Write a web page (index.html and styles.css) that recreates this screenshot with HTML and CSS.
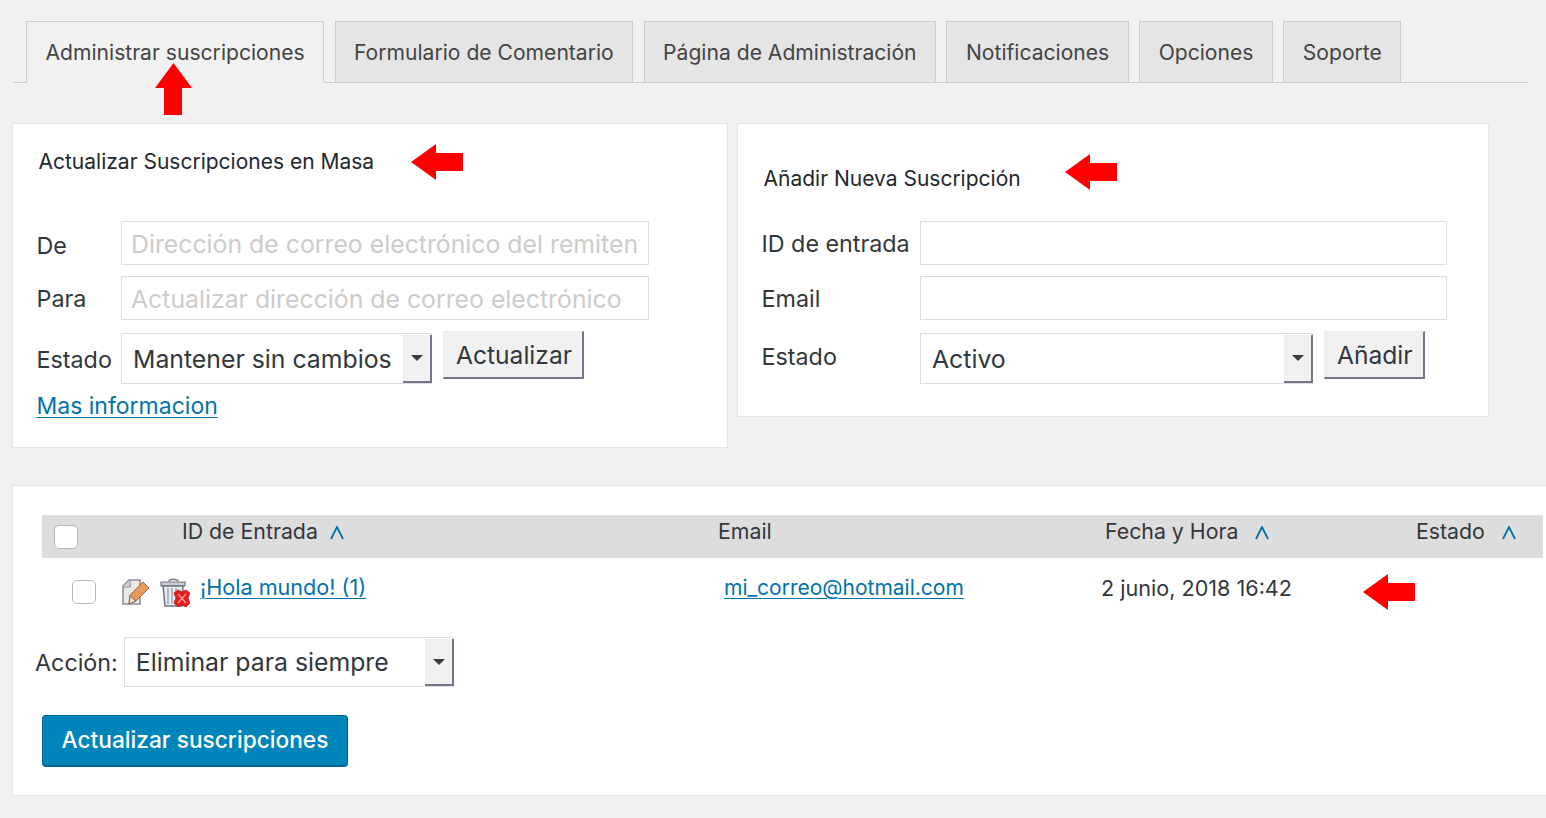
FILE: index.html
```html
<!DOCTYPE html>
<html lang="es">
<head>
  <meta charset="UTF-8" />
  <meta name="viewport" content="width=device-width, initial-scale=1" />
  <title>Suscripciones</title>
  <link rel="stylesheet" href="styles.css">
</head>
<body>

  <nav class="tabs">
    <a class="tab tab-active" href="#">Administrar suscripciones
      <svg class="arrow arrow-up" width="37" height="52" viewBox="0 0 37 52"><path d="M18.5 0L37 25H27V52H9V25H0Z" fill="#f00"/></svg>
    </a>
    <a class="tab" href="#">Formulario de Comentario</a>
    <a class="tab" href="#">Página de Administración</a>
    <a class="tab" href="#">Notificaciones</a>
    <a class="tab" href="#">Opciones</a>
    <a class="tab" href="#">Soporte</a>
  </nav>

  <div class="panels">
    <section class="panel panel-mass">
      <h2 class="panel-title">Actualizar Suscripciones en Masa
        <svg class="arrow" width="52" height="36" viewBox="0 0 52 36"><path d="M0 18L25 0V9H52V27H25V36Z" fill="#f00"/></svg>
      </h2>
      <form class="sub-form">
        <label class="field-label">De</label>
        <input class="field" type="text" placeholder="Dirección de correo electrónico del remitente" />
        <label class="field-label">Para</label>
        <input class="field" type="text" placeholder="Actualizar dirección de correo electrónico" />
        <label class="field-label field-label-status">Estado</label>
        <div class="status-row">
          <div class="select select-keep">
            <select><option>Mantener sin cambios</option></select>
            <span class="select-btn"></span>
          </div>
          <button class="btn" type="button">Actualizar</button>
        </div>
      </form>
      <a class="more-link" href="#">Mas informacion</a>
    </section>

    <section class="panel panel-new">
      <h2 class="panel-title">Añadir Nueva Suscripción
        <svg class="arrow" width="52" height="36" viewBox="0 0 52 36"><path d="M0 18L25 0V9H52V27H25V36Z" fill="#f00"/></svg>
      </h2>
      <form class="sub-form">
        <label class="field-label">ID de entrada</label>
        <input class="field" type="text" />
        <label class="field-label">Email</label>
        <input class="field" type="text" />
        <label class="field-label field-label-status">Estado</label>
        <div class="status-row">
          <div class="select select-active">
            <select><option>Activo</option></select>
            <span class="select-btn"></span>
          </div>
          <button class="btn" type="button">Añadir</button>
        </div>
      </form>
    </section>
  </div>

  <section class="panel panel-list">
    <div class="list-head">
      <span class="cell-check"><input class="check" type="checkbox" /></span>
      <span class="head-id">ID de Entrada <svg class="sort" width="14" height="14" viewBox="0 0 14 14"><path d="M1 13L7 1L13 13" fill="none" stroke="#0073aa" stroke-width="1.8"/></svg></span>
      <span class="head-email">Email</span>
      <span class="head-date">Fecha y Hora <svg class="sort" width="14" height="14" viewBox="0 0 14 14"><path d="M1 13L7 1L13 13" fill="none" stroke="#0073aa" stroke-width="1.8"/></svg></span>
      <span class="head-status">Estado <svg class="sort" width="14" height="14" viewBox="0 0 14 14"><path d="M1 13L7 1L13 13" fill="none" stroke="#0073aa" stroke-width="1.8"/></svg></span>
    </div>

    <div class="list-row">
      <span class="row-check"><input class="check" type="checkbox" /></span>
      <span class="row-icons">
        <svg width="30" height="30" viewBox="0 0 30 30">
          <path d="M3 9L9 3H20V27H3Z" fill="#eceae6" stroke="#8f8f98" stroke-width="1.6"/>
          <path d="M3 10H10V3" fill="#d5d5d8" stroke="#8f8f98" stroke-width="1.2"/>
          <path d="M10 18L23 5L29 11L16 24L9 27Z" fill="#e49a5c" stroke="#a86a3a" stroke-width="1"/>
          <path d="M9 27L10 19L16 24Z" fill="#f3dcb8" stroke="#5a5a78" stroke-width="0.8"/>
        </svg>
        <svg width="30" height="30" viewBox="0 0 30 30">
          <path d="M9 4.500C9 1.500 18 1.500 18 4.500" fill="none" stroke="#777b85" stroke-width="1.5"/>
          <path d="M1 5H25V9H1Z" fill="#c9ced6" stroke="#70747e" stroke-width="1.2"/>
          <path d="M3 9H23L22 29H5Z" fill="#e6e9ee" stroke="#70747e" stroke-width="1.5"/>
          <path d="M8 11V27M12 11V27M16 11V17" stroke="#a9afb9" stroke-width="1.6"/>
          <path d="M14 16L18 13L22 15L26 13L30 16L28 21L30 26L26 30L22 28L18 30L14 26L16 21Z" fill="#e4201c" stroke="#b71a16" stroke-width="0.8"/>
          <path d="M18 17L26 26M26 17L18 26" stroke="#f4a09a" stroke-width="1.2"/>
        </svg>
      </span>
      <a class="row-link row-title" href="#">¡Hola mundo! (1)</a>
      <a class="row-link row-email" href="#">mi_correo@hotmail.com</a>
      <span class="row-date">2 junio, 2018 16:42</span>
      <svg class="arrow" width="52" height="36" viewBox="0 0 52 36"><path d="M0 18L25 0V9H52V27H25V36Z" fill="#f00"/></svg>
    </div>

    <div class="action-row">
      <label class="field-label">Acción:</label>
      <div class="select select-action">
        <select><option>Eliminar para siempre</option></select>
        <span class="select-btn"></span>
      </div>
    </div>

    <button class="btn-primary" type="button">Actualizar suscripciones</button>
  </section>

</body>
</html>
```

FILE: styles.css
```css
html, body {
  overflow: hidden;
}
body {
  font-family: Inter, "Liberation Sans", sans-serif;
  margin: 0;
  width: 1546px;
  height: 818px;
  background: #f1f1f1;
  color: #32373c;
}

/* tabs */
.tabs {
  display: flex;
  gap: 10.4px;
  height: 62px;
  width: 1515px;
  box-sizing: border-box;
  margin: 21px 0 0 13px;
  padding-left: 13px;
  border-bottom: 1px solid #ccc;
}
.tab {
  position: relative;
  display: flex;
  align-items: center;
  justify-content: center;
  box-sizing: border-box;
  height: 62px;
  padding: 0 18.5px;
  border: 1px solid #ccc;
  background: #e5e5e5;
  color: #444;
  font-size: 21.1px;
  text-decoration: none;
  white-space: nowrap;
}
.tab-active {
  background: #f1f1f1;
  border-bottom-color: #f1f1f1;
}
.arrow {
  flex: none;
  display: block;
}
.arrow-up {
  position: absolute;
  left: 128px;
  top: 41px;
}

/* top panels */
.panels {
  display: flex;
  align-items: flex-start;
  gap: 9px;
  margin: 40px 0 0 12px;
}
.panel {
  background: #fff;
  border: 1px solid #e5e5e5;
  box-sizing: border-box;
}
.panel-mass {
  width: 716px;
  height: 325px;
  padding: 19px 24px 0;
}
.panel-new {
  width: 752px;
  height: 294px;
  padding: 30px 24px 0;
}
.panel-title {
  display: flex;
  align-items: center;
  gap: 37px;
  margin: 0 0 0 1.5px;
  height: 36px;
  font-size: 21px;
  font-weight: 400;
  color: #23282d;
  white-space: nowrap;
}
.panel-mass .arrow { margin-top: 2px; }
.panel-new .panel-title {
  align-items: flex-end;
  gap: 44px;
  height: 37px;
}
.panel-new .arrow { align-self: flex-start; }

.sub-form {
  display: grid;
  align-items: center;
  row-gap: 11px;
}
.panel-mass .sub-form {
  grid-template-columns: 84px 528px;
  margin-top: 42px;
}
.panel-new .sub-form {
  grid-template-columns: 158px 527px;
  margin-top: 30px;
}
.field-label {
  font-size: 23.3px;
  color: #32373c;
  white-space: nowrap;
}
.sub-form .field-label { margin-left: -0.5px; }
.sub-form .field-label:first-child { padding-top: 1px; }
.panel-mass .field-label:first-child { padding-top: 5px; }
.sub-form .field-label-status {
  padding-top: 3px;
}
.panel-new .field-label-status {
  padding-top: 0;
  margin-top: -2px;
}
.field {
  box-sizing: border-box;
  width: 100%;
  height: 44px;
  padding: 2px 9px 0;
  border: 1px solid #ddd;
  background: #fff;
  font-family: inherit;
  font-size: 24.8px;
  color: #32373c;
  outline: none;
}
.field::placeholder {
  color: #ccc;
  opacity: 1;
}
.status-row {
  display: flex;
  align-items: flex-start;
  gap: 11px;
  width: 560px;
}

/* select box with the square dropdown button */
.select {
  position: relative;
  flex: none;
  height: 51px;
  margin-top: 2px;
}
.select select {
  appearance: none;
  box-sizing: border-box;
  width: 100%;
  height: 100%;
  padding: 0 0 0 11px;
  border: 1px solid #ddd;
  border-radius: 0;
  background: #fff;
  font-family: inherit;
  font-size: 24.8px;
  color: #32373c;
}
.select-keep { width: 311px; }
.select-active { width: 393px; }
.select-action { width: 330px; height: 50px; margin-top: 0; }
.select-btn {
  position: absolute;
  top: 2px;
  right: 0;
  bottom: 1px;
  width: 29px;
  box-sizing: border-box;
  background: #f1f1f1;
  border-right: 2px solid #73738a;
  border-bottom: 2px solid #73738a;
}
.select-btn::after {
  content: "";
  position: absolute;
  left: 8px;
  top: 20px;
  border-top: 6px solid #3c3c42;
  border-left: 6px solid transparent;
  border-right: 6px solid transparent;
}
.btn {
  box-sizing: border-box;
  height: 48px;
  padding: 0 10px 0 12px;
  border: 0;
  border-top: 1px solid #eee;
  border-left: 1px solid #eee;
  border-right: 2px solid #73738a;
  border-bottom: 2px solid #73738a;
  background: #f1f1f1;
  font-family: inherit;
  font-size: 24.6px;
  color: #32373c;
}
.more-link {
  display: inline-block;
  margin: 8px 0 0 -0.5px;
  color: #0073aa;
  font-size: 23px;
  line-height: 29px;
  text-decoration: underline;
  text-underline-offset: 3px;
  text-decoration-thickness: 1px;
}

/* subscriptions list */
.panel-list {
  width: 1560px;
  height: 311px;
  margin: 37px 0 0 12px;
  padding: 29px 0 0 29px;
}
.list-head {
  display: flex;
  align-items: center;
  box-sizing: border-box;
  width: 1501px;
  height: 43px;
  padding-bottom: 11px;
  background: #ddd;
  font-size: 21.3px;
  color: #32373c;
  white-space: nowrap;
}
.cell-check {
  display: flex;
  box-sizing: border-box;
  width: 140px;
  margin-bottom: -9px;
  padding: 3px 0 0 12px;
}
.head-id { width: 536px; }
.head-email { width: 387px; }
.head-date { width: 311px; }
.sort { margin-left: 6px; vertical-align: -1px; }
.head-date .sort { margin-left: 11px; }
.head-status .sort { margin-left: 11px; }
.check {
  appearance: none;
  box-sizing: border-box;
  width: 24px;
  height: 24px;
  margin: 0;
  background: #fff;
  border: 1px solid #b4b9be;
  border-radius: 5px;
}
.list-row {
  display: flex;
  align-items: center;
  height: 60px;
  font-size: 21.6px;
  white-space: nowrap;
}
.row-check {
  display: flex;
  box-sizing: border-box;
  width: 78px;
  padding: 7px 0 0 30px;
}
.row-icons { display: flex; gap: 10px; width: 80px; padding-top: 7px; }
.row-link { margin-top: -2px; color: #0073aa; text-underline-offset: 3px; text-decoration-thickness: 1px; }
.row-title { width: 524px; }
.row-email { width: 377px; font-size: 21px; }
.row-date { width: 262px; margin-top: -1px; }
.list-row .arrow { margin-top: 8px; }
.action-row {
  display: flex;
  align-items: center;
  gap: 6px;
  margin: 19px 0 0 -7px;
}
.btn-primary {
  display: block;
  box-sizing: border-box;
  width: 306px;
  height: 52px;
  margin-top: 28px;
  padding-bottom: 4px;
  border: 1px solid #006799;
  border-bottom-width: 2px;
  border-radius: 4px;
  background: #0085ba;
  color: #fff;
  font-family: inherit;
  font-size: 22.7px;
  font-weight: 500;
}
```
